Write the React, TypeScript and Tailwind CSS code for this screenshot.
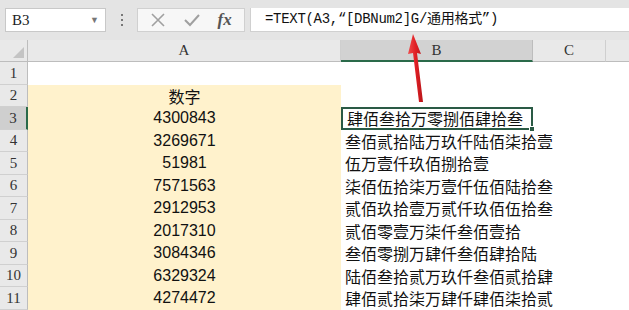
import React from 'react';

// --- DATA --- //

const rows: { num: string; text: string }[] = [
    { num: '4300843', text: '肆佰叁拾万零捌佰肆拾叁' },
    { num: '3269671', text: '叁佰贰拾陆万玖仟陆佰柒拾壹' },
    { num: '51981', text: '伍万壹仟玖佰捌拾壹' },
    { num: '7571563', text: '柒佰伍拾柒万壹仟伍佰陆拾叁' },
    { num: '2912953', text: '贰佰玖拾壹万贰仟玖佰伍拾叁' },
    { num: '2017310', text: '贰佰零壹万柒仟叁佰壹拾' },
    { num: '3084346', text: '叁佰零捌万肆仟叁佰肆拾陆' },
    { num: '6329324', text: '陆佰叁拾贰万玖仟叁佰贰拾肆' },
    { num: '4274472', text: '肆佰贰拾柒万肆仟肆佰柒拾贰' },
];

const cjk = "font-['Noto_Sans_CJK_SC',sans-serif]";
const serif = "font-['Liberation_Serif','Noto_Sans_CJK_SC',serif]";

// --- SUB-COMPONENTS --- //

const RowHead: React.FC<{ n: number; active?: boolean }> = ({ n, active }) => (
    <div
        className={`h-[22.5px] flex items-center justify-center border-b border-[#d0d0d0] text-[15px] text-[#333] ${serif} ${
            active ? 'bg-[#cfcfcf] border-r-2 border-r-[#2a6a4a]' : 'bg-[#e9e9e9] border-r border-r-[#bdbdbd]'
        }`}
    >
        {n}
    </div>
);

const FormulaBar: React.FC = () => (
    <div className="h-[40px] bg-[#e4e4e4] flex items-start pt-[8px] pl-[5px]">
        <div className="w-[101px] h-[24px] bg-white border border-[#c8c8c8] flex items-center justify-between px-[6px]">
            <span className={`text-[15px] text-[#222] ${serif}`}>B3</span>
            <span className="text-[9px] text-[#777]">▼</span>
        </div>
        <div className="w-[31px] h-[24px] flex flex-col items-center justify-center gap-[3px]">
            <span className="w-[2px] h-[2px] bg-[#777]" />
            <span className="w-[2px] h-[2px] bg-[#777]" />
            <span className="w-[2px] h-[2px] bg-[#777]" />
        </div>
        <div className="w-[108px] h-[24px] bg-[#f7f7f7] border border-[#d0d0d0] flex items-center justify-around px-[4px]">
            <svg width="16" height="16" viewBox="0 0 16 16">
                <path d="M2 2 L14 14 M14 2 L2 14" stroke="#a0a0a0" strokeWidth="1.6" />
            </svg>
            <svg width="18" height="16" viewBox="0 0 18 16">
                <path d="M2 8 L7 13 L16 3" stroke="#a0a0a0" strokeWidth="2" fill="none" />
            </svg>
            <span className={`italic font-bold text-[17px] text-[#555] font-['Liberation_Serif',serif]`}>fx</span>
        </div>
        <div className="ml-[5px] flex-1 h-[24px] bg-white border-l border-[#d0d0d0] border-b flex items-center pl-[14px]">
            <span className={`text-[14px] text-[#111] font-['Liberation_Mono','Noto_Sans_CJK_SC',monospace] tracking-[-0.3px]`}>
                =TEXT(A3,“[DBNum2]G/通用格式”)
            </span>
        </div>
    </div>
);

const Arrow: React.FC = () => (
    <svg className="absolute left-[400px] top-[32px]" width="30" height="74" viewBox="0 0 30 74">
        <defs>
            <linearGradient id="ar" x1="0" x2="1" y1="0" y2="0">
                <stop offset="0" stopColor="#f04a4a" />
                <stop offset="0.5" stopColor="#e01f25" />
                <stop offset="1" stopColor="#b81418" />
            </linearGradient>
        </defs>
        <polygon points="13,2 21,22 17,21 23,70 19,70 13,21 8,22" fill="url(#ar)" />
    </svg>
);

// --- MAIN COMPONENT --- //

const App: React.FC = () => {
    return (
        <div className="w-[629px] h-[310px] overflow-hidden bg-white relative">
            <FormulaBar />
            <div className="grid grid-cols-[28px_313px_192px_73px_1fr]">
                {/* header row */}
                <div className="h-[22px] bg-[#e9e9e9] border-r border-b border-[#bdbdbd] relative">
                    <div className="absolute right-[3px] bottom-[3px] w-0 h-0 border-l-[11px] border-l-transparent border-b-[11px] border-b-[#c4c4c4]" />
                </div>
                <div className={`h-[22px] bg-[#e9e9e9] border-r border-r-[#cfcfcf] border-b border-b-[#bdbdbd] flex items-center justify-center text-[15px] text-[#333] ${serif}`}>
                    A
                </div>
                <div className={`h-[22px] bg-[#d2d2d2] border-r border-r-[#bdbdbd] border-b-2 border-b-[#2a6a4a] flex items-center justify-center text-[15px] text-[#333] ${serif}`}>
                    B
                </div>
                <div className={`h-[22px] bg-[#e9e9e9] border-r border-r-[#cfcfcf] border-b border-b-[#bdbdbd] flex items-center justify-center text-[15px] text-[#333] ${serif}`}>
                    C
                </div>
                <div className="h-[22px] bg-[#e9e9e9] border-b border-b-[#bdbdbd]" />

                {/* row 1 */}
                <RowHead n={1} />
                <div className="h-[22.5px]" />
                <div className="h-[22.5px]" />
                <div className="h-[22.5px]" />
                <div className="h-[22.5px]" />

                {/* row 2 */}
                <RowHead n={2} />
                <div className={`h-[22.5px] bg-[#fff2cc] flex items-center justify-center text-[16px] text-[#111] ${cjk}`}>数字</div>
                <div className="h-[22.5px]" />
                <div className="h-[22.5px]" />
                <div className="h-[22.5px]" />

                {rows.map((r, i) => (
                    <React.Fragment key={r.num}>
                        <RowHead n={i + 3} active={i === 0} />
                        <div className="h-[22.5px] bg-[#fff2cc] flex items-center justify-center text-[16px] text-[#111] font-['Liberation_Sans',sans-serif]">
                            {r.num}
                        </div>
                        <div
                            className={`h-[22.5px] flex items-center pl-[4px] text-[16px] text-[#111] whitespace-nowrap overflow-visible relative z-10 ${cjk} ${
                                i === 0 ? 'border-2 border-[#2a5a45] pl-[2px]' : ''
                            }`}
                        >
                            {r.text}
                            {i === 0 && (
                                <span className="absolute right-[-4px] bottom-[-4px] w-[6px] h-[6px] bg-[#2a5a45] border border-white" />
                            )}
                        </div>
                        <div className="h-[22.5px]" />
                        <div className="h-[22.5px]" />
                    </React.Fragment>
                ))}
            </div>
            <Arrow />
        </div>
    );
};

export default App;
